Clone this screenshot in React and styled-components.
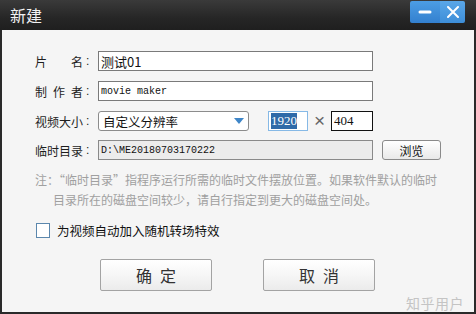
import React from "react";
import styled, { createGlobalStyle } from "styled-components";

const Global = createGlobalStyle`
  html, body { margin: 0; padding: 0; background: #f5f5f5; }
  body { font-family: "Noto Sans CJK SC", "Liberation Sans", sans-serif; }
`;

const CJK = `"Noto Sans CJK SC", "Liberation Sans", sans-serif`;

const Window = styled.div`
  position: relative;
  width: 476px;
  height: 314px;
  display: flex;
  flex-direction: column;
  overflow: hidden;
  background: #2a2a2a;
`;

const TitleBar = styled.div`
  height: 30px;
  flex: 0 0 30px;
  display: flex;
  align-items: flex-start;
  justify-content: space-between;
  background: linear-gradient(#3a3a3a, #262626 60%, #1f1f1f);
  box-sizing: border-box;
  padding: 0 11px 0 10px;
`;

const Title = styled.div`
  font-family: ${CJK};
  font-size: 16px;
  line-height: 30px;
  color: #f2f2f2;
`;

const WinButtons = styled.div`
  display: flex;
  margin-top: 1px;
  height: 22px;
  border-radius: 2px;
  overflow: hidden;
`;

const WinBtn = styled.div`
  width: ${(p) => p.$w}px;
  height: 22px;
  display: flex;
  align-items: center;
  justify-content: center;
  background: ${(p) =>
    p.$close
      ? "linear-gradient(#5aa7e8, #3d8ed8)"
      : "linear-gradient(#4c9de4, #3380cf)"};
`;

const Body = styled.div`
  flex: 1;
  background: #f5f5f5;
  margin: 0 2px 2px 2px;
  box-sizing: border-box;
  padding: 21px 0 0 33px;
  display: flex;
  flex-direction: column;
`;

const Row = styled.div`
  display: flex;
  align-items: center;
  height: 20px;
  margin-bottom: ${(p) => p.$mb ?? 10}px;
`;

const Label = styled.div`
  width: 63px;
  flex: 0 0 63px;
  display: flex;
  align-items: center;
  font-family: ${CJK};
  font-size: 12px;
  color: #1e1e1e;
`;

const LabelText = styled.span`
  display: inline-block;
  width: 48px;
  text-align: justify;
  text-align-last: justify;
`;

const Colon = styled.span`
  font-family: "Liberation Sans", sans-serif;
  font-size: 12px;
  margin-left: 3px;
`;

const TextBox = styled.div`
  box-sizing: border-box;
  width: ${(p) => p.$w}px;
  height: 20px;
  border: 1px solid ${(p) => p.$border || "#7a7a7a"};
  background: ${(p) => p.$bg || "#ffffff"};
  display: flex;
  align-items: center;
  padding-left: 2px;
  font-family: ${(p) =>
    p.$mono
      ? `"Liberation Mono", monospace`
      : p.$serif
      ? `"Liberation Serif", serif`
      : CJK};
  font-size: ${(p) => p.$fs || 13}px;
  color: #111;
  white-space: nowrap;
  overflow: hidden;
`;

const Selected = styled.span`
  background: #2f6aa8;
  color: #fff;
`;

const Select = styled.div`
  box-sizing: border-box;
  width: 151px;
  height: 20px;
  border: 1px solid #8c8c8c;
  border-radius: 3px;
  background: #fff;
  display: flex;
  align-items: center;
  justify-content: space-between;
  padding: 0 4px 0 4px;
  font-family: ${CJK};
  font-size: 12.5px;
  color: #111;
  margin-right: 19px;
`;

const Times = styled.span`
  width: 23px;
  text-align: center;
  font-family: "Liberation Sans", sans-serif;
  font-size: 19px;
  color: #666;
  line-height: 20px;
`;

const SmallButton = styled.div`
  box-sizing: border-box;
  width: 59px;
  height: 20px;
  margin-left: 9px;
  border: 1px solid #8a8a8a;
  border-radius: 3px;
  background: linear-gradient(#ffffff, #e9e9e9);
  display: flex;
  align-items: center;
  justify-content: center;
  font-family: ${CJK};
  font-size: 12px;
  color: #111;
`;

const Note = styled.div`
  font-family: ${CJK};
  font-size: 12px;
  line-height: 20px;
  color: #a0a0a0;
  white-space: nowrap;
`;

const NoteLine = styled.div`
  padding-left: ${(p) => p.$indent || 0}px;
`;

const CheckRow = styled.label`
  display: flex;
  align-items: center;
  margin-top: 13px;
  margin-left: 1px;
  height: 15px;
  font-family: ${CJK};
  font-size: 12.5px;
  color: #111;
`;

const CheckBox = styled.span`
  box-sizing: border-box;
  width: 14px;
  height: 15px;
  border: 1px solid #5b87ad;
  background: #fff;
  margin-right: 7px;
`;

const Buttons = styled.div`
  display: flex;
  gap: 51px;
  margin-top: 21px;
  margin-left: 65px;
`;

const BigButton = styled.div`
  box-sizing: border-box;
  width: 112px;
  height: 32px;
  border: 1px solid #a3a3a3;
  border-radius: 2px;
  background: linear-gradient(#ffffff, #f6f6f6 50%, #ebebeb);
  display: flex;
  align-items: center;
  justify-content: center;
  font-family: ${CJK};
  font-size: 16px;
  letter-spacing: 8px;
  text-indent: 8px;
  color: #333;
`;

const Watermark = styled.div`
  position: absolute;
  right: 12px;
  bottom: 1px;
  font-family: ${CJK};
  font-size: 14px;
  color: #c4c4c4;
  letter-spacing: 0.5px;
`;

export default function App() {
  return (
    <>
      <Global />
      <Window>
        <TitleBar>
          <Title>新建</Title>
          <WinButtons>
            <WinBtn $w={30}>
              <svg width="14" height="4" viewBox="0 0 14 4">
                <rect x="0.5" y="0.5" width="13" height="3" rx="1.5" fill="#fff" />
              </svg>
            </WinBtn>
            <WinBtn $w={25} $close>
              <svg width="12" height="12" viewBox="0 0 12 12">
                <path d="M1 1 L11 11 M11 1 L1 11" stroke="#fff" strokeWidth="2" strokeLinecap="round" />
              </svg>
            </WinBtn>
          </WinButtons>
        </TitleBar>
        <Body>
          <Row>
            <Label>
              <LabelText>片 名</LabelText>
              <Colon>:</Colon>
            </Label>
            <TextBox $w={275} $fs={13}>测试01</TextBox>
          </Row>
          <Row>
            <Label>
              <LabelText>制 作 者</LabelText>
              <Colon>:</Colon>
            </Label>
            <TextBox $w={275} $mono $fs={10}>movie maker</TextBox>
          </Row>
          <Row $mb={9}>
            <Label>
              <LabelText>视频大小</LabelText>
              <Colon>:</Colon>
            </Label>
            <Select>
              <span>自定义分辨率</span>
              <svg width="10" height="6" viewBox="0 0 10 6">
                <path d="M0 0 L10 0 L5 6 Z" fill="#3f86c8" />
              </svg>
            </Select>
            <TextBox $w={40} $serif $fs={13} $border="#86b9e6">
              <Selected>1920</Selected>
            </TextBox>
            <Times>×</Times>
            <TextBox $w={42} $serif $fs={13} $border="#111">404</TextBox>
          </Row>
          <Row $mb={10}>
            <Label>
              <LabelText>临时目录</LabelText>
              <Colon>:</Colon>
            </Label>
            <TextBox $w={275} $mono $fs={10} $bg="#ececec" $border="#8a8a8a">
              D:\ME20180703170222
            </TextBox>
            <SmallButton>浏览</SmallButton>
          </Row>
          <Note>
            <NoteLine>注：“临时目录”指程序运行所需的临时文件摆放位置。如果软件默认的临时</NoteLine>
            <NoteLine $indent={18}>目录所在的磁盘空间较少，请自行指定到更大的磁盘空间处。</NoteLine>
          </Note>
          <CheckRow>
            <CheckBox />
            为视频自动加入随机转场特效
          </CheckRow>
          <Buttons>
            <BigButton>确定</BigButton>
            <BigButton>取消</BigButton>
          </Buttons>
        </Body>
        <Watermark>知乎用户</Watermark>
      </Window>
    </>
  );
}
